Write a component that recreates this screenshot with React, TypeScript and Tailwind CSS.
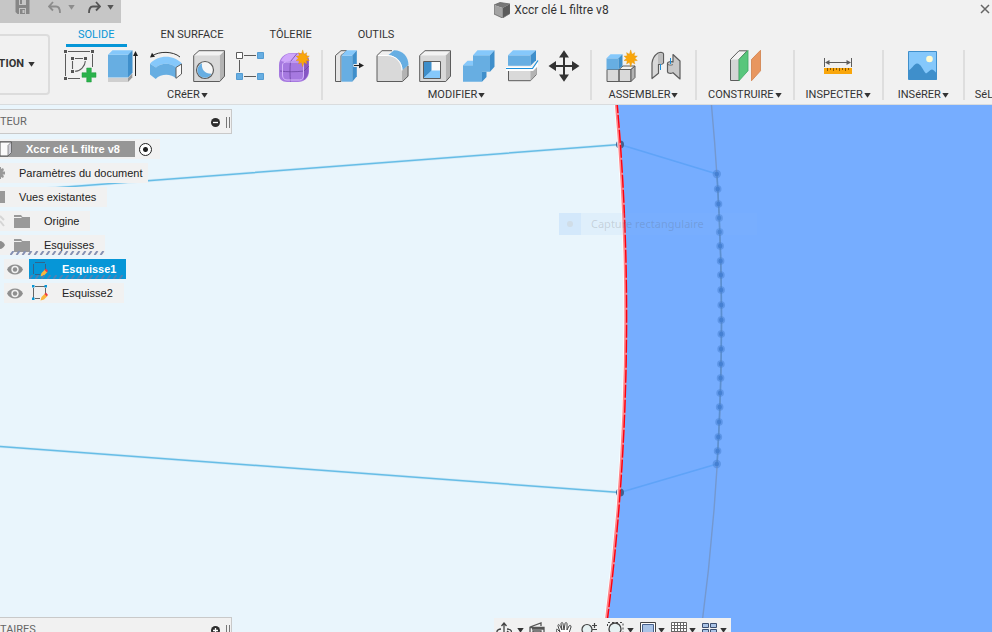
import type { ReactNode } from 'react';

interface IconProps {
  children: ReactNode;
}

interface ToolGroup {
  label: string;
  padding: string;
  tools: { name: string; icon: ReactNode }[];
}

const BLUE = '#67aee2';
const BLUE_LIGHT = '#85c8fb';
const BLUE_DARK = '#3f8fcb';
const LINE = '#5c5c5c';

/** 32px tool icon frame */
function Icon({ children }: IconProps) {
  return (
    <svg className="w-8 h-8 overflow-visible" viewBox="0 0 32 32" fill="none">
      {children}
    </svg>
  );
}

function Caret({ className = 'text-[#333]' }: { className?: string }) {
  return (
    <svg className={`w-[7px] h-[5px] shrink-0 ${className}`} viewBox="0 0 7 5">
      <path d="M0.3 0h6.4L3.5 4.8z" fill="currentColor" />
    </svg>
  );
}

/** Orange "new" star, ten spikes */
function Star({ x, y }: { x: number; y: number }) {
  const points = Array.from({ length: 20 }, (_, i) => {
    const r = i % 2 === 0 ? (i % 5 === 0 ? 8.4 : 7) : 4.2;
    const a = (i * Math.PI) / 10;
    return `${x + r * Math.sin(a)},${y - r * Math.cos(a)}`;
  }).join(' ');
  return <polygon points={points} fill="#f9a60b" stroke="#e39203" strokeWidth="0.4" />;
}

const sketchIcon = (
  <Icon>
    <path d="M4 1.5h22M1.5 4v22M28.5 4v13M4 28.5h12" stroke={LINE} />
    <path d="M11 8.5h8M8.500 11v8M21.3 11c0 5-5 10.3-10.3 10.3" stroke={LINE} strokeWidth="1.1" />
    <path d="M0 0h3v3H0zM27 0h3v3h-3zM0 27h3v3H0zM7 7h3v3H7zM20 7h3v3h-3zM7 20h3v3H7z" fill="#555" />
    <path d="M22.7 18h4.600v4.700H32v4.600h-4.700V32h-4.600v-4.700H18v-4.600h4.700z" fill="#2bb24c" stroke="#1f9a3f" strokeWidth="0.5" />
  </Icon>
);

const extrudeIcon = (
  <Icon>
    <path d="M1 28h20v4H1z" fill="#cfcfcf" />
    <path d="M21 28l4.300-4.500v4L21 32z" fill="#999" />
    <path d="M1 4.700h20V27.500H1z" fill={BLUE} />
    <path d="M1 4.700L5.500.3h20L21 4.700z" fill={BLUE_LIGHT} />
    <path d="M21 4.700L25.500.3v22.500L21 27.500z" fill={BLUE_DARK} />
    <path d="M28.5 5v21" stroke="#222" />
    <path d="M26 6l2.500-5L31 6z" fill="#222" />
  </Icon>
);

const revolveIcon = (
  <Icon>
    <path d="M0 13.700C8 4.500 24 4.500 32 13.700L26 17.500C21 12.500 11 12.500 6 17.500z" fill={BLUE_LIGHT} />
    <path d="M0 13.700l6 3.800c5-5 15-5 20 0V28.500c-5-5-15-5-20.300.5L0 24.500z" fill={BLUE} />
    <path d="M26 17.500l5.500-3.500v10L26 28.300z" fill="#fafafa" stroke={LINE} />
    <path d="M2 6C9 1 23 1 30 7" stroke="#333" />
    <path d="M0 7.500L2 2.800l3 4z" fill="#222" />
  </Icon>
);

/** Grey cube outline shared by the hole and shell icons */
const greyCube = (
  <g stroke={LINE} strokeLinejoin="round">
    <path d="M.7 5.500L6 .7h25.500l-4.700 4.800z" fill="#f3f3f3" stroke="none" />
    <path d="M.7 5.500h26v26H.7z" fill="#d9d9d9" stroke="none" />
    <path d="M26.800 5.500L31.500.7v25.500l-4.700 5.300z" fill="#b3b3b3" stroke="none" />
    <path d="M.7 5.500L6 .7h25.500v25.500l-4.700 5.300H.7z" />
  </g>
);

const holeIcon = (
  <Icon>
    {greyCube}
    <circle cx="12" cy="20" r="8.5" fill="#f6f6f6" stroke={LINE} strokeWidth="1.2" />
    <path d="M9 13.300c-1 6 3 10.700 9.500 10.500A7.500 7.500 0 1 1 9 13.300z" fill={BLUE} />
  </Icon>
);

const patternIcon = (
  <Icon>
    <path d="M8 5.500h12M3.500 10v12M8 26.500h12" stroke={LINE} />
    <path d="M.5 2.500h6v6h-6z" fill="#fff" stroke={LINE} />
    <path d="M21.500 2.500h6v6h-6zM.5 23.500h6v6h-6zM21.500 23.500h6v6h-6z" fill={BLUE} stroke={BLUE_DARK} strokeWidth="0.8" />
  </Icon>
);

const formIcon = (
  <Icon>
    <path d="M0 15C0 8 6 3 12 3h9c6 0 9 3 9 8v10c0 7-5 11-11 11H8c-5 0-8-3-8-7z" fill="#a679e0" />
    <path d="M2 11c2-5 6-7.500 10-7.500h9c4 0 6 1 8 4l-5 4c-6-1-12-1-18 .5z" fill="#cfa6fb" />
    <path d="M25 12l4.500-4v13c0 4-2 7-5 9.500.7-6 .7-12 .5-18.500z" fill="#8757c4" />
    <path d="M1 21c7 1 16 1 24 0l5-5M11.500 31.500c-.7-7-.7-13 0-20L18 3.500" stroke="#6c45a3" strokeWidth="0.8" />
    <path d="M3.500 15c0-2 2-3 4-3h14c2 0 3 1 3 3v10c0 3-1 5-4 5H8c-3 0-4.500-2-4.500-5z" stroke="#d5b5fa" />
    <Star x={23.7} y={8.3} />
  </Icon>
);

const pressPullIcon = (
  <Icon>
    <path d="M2.500 5.500L8 .7h6L8 5.500v26H2.500z" fill="#e6e6e6" stroke={LINE} />
    <path d="M8.500 5.500h10.800v26.200H8.500z" fill={BLUE} />
    <path d="M8.500 5.500L13.500.3h10.300l-4.500 5.200z" fill={BLUE_LIGHT} />
    <path d="M19.300 5.500L23.800.3v26l-4.500 5.400z" fill={BLUE_DARK} />
    <path d="M20.500 15.500h6" stroke="#fff" strokeWidth="3" />
    <path d="M21 15.500h6" stroke="#222" strokeWidth="1.2" />
    <path d="M26 12.700l5 2.800-5 2.800z" fill="#222" />
  </Icon>
);

const filletIcon = (
  <Icon>
    <path d="M1 5.500L6 .7h7.500L20 2l5.500 16 6.500-4v12.200l-5.500 5.300H1z" fill="#f0f0f0" />
    <path d="M1 5.500h10c9 0 15 7 15 15v11H1z" fill="#d9d9d9" />
    <path d="M26 20l6.300-5v11.200L26 31.500z" fill="#b3b3b3" />
    <path d="M12.500 5L18 .3C27 .3 32.500 7 32.500 15L26.500 20C26.500 12 21 6 12.500 5z" fill={BLUE} />
    <path d="M1 5.500h10c9 0 15 7 15 15" stroke="#fff" />
    <path d="M16 .7H6L1 5.500v26h25.500l5.500-5.300V16" stroke={LINE} strokeLinejoin="round" />
  </Icon>
);

const shellIcon = (
  <Icon>
    {greyCube}
    <path d="M4.500 11.500h17v17h-17z" fill="#fafafa" stroke={LINE} />
    <path d="M5 12h7.500v9L5 28z" fill={BLUE_DARK} />
    <path d="M5 28l7.500-7.500H21V28z" fill={BLUE_LIGHT} />
  </Icon>
);

const combineIcon = (
  <Icon>
    <path d="M1 15.300h10V5.300h17v16.400h-8v10H1z" fill={BLUE} />
    <path d="M1 15.300l4.500-4.600H11v4.600zM11 5.300L15.500.3h17L28 5.300z" fill={BLUE_LIGHT} />
    <path d="M28 5.300L32.500.3v16.500L28 21.700zM20 21.700h4.500V27L20 31.700z" fill={BLUE_DARK} />
  </Icon>
);

const splitIcon = (
  <Icon>
    <path d="M3.500 20.500h22L31 15v10l-5.500 5.700h-22z" fill="#d9d9d9" stroke={LINE} />
    <path d="M25.500 21L31 15.500v9.300l-5.500 5.700z" fill="#b3b3b3" />
    <path d="M1 17h27l5-5v4l-5 5H1z" fill="#fff" />
    <path d="M3 5.300h22.500v10.500H3z" fill={BLUE} />
    <path d="M3 5.300L8 .3h23l-5.500 5z" fill={BLUE_LIGHT} />
    <path d="M25.500 5.300l5.500-5v10l-5.500 5.500z" fill={BLUE_DARK} />
    <path d="M1 18.500h26.500L33 10.500" stroke="#1d8fd8" strokeWidth="1.2" />
  </Icon>
);

const moveIcon = (
  <Icon>
    <path d="M16 5v22M5 16h22" stroke="#333" strokeWidth="2" />
    <path d="M16 .3l5 7.200H11zM16 31.700l5-7.200H11zM.5 16L8 11v10zM31.500 16L24 11v10z" fill="#333" />
  </Icon>
);

const newComponentIcon = (
  <Icon>
    <path d="M1 19.500h12v12H1zM13 19.500h12v12H13z" fill="#d9d9d9" stroke={LINE} />
    <path d="M13 19.500l4-3.500h12l-4 3.500z" fill="#f3f3f3" stroke={LINE} />
    <path d="M25 19.500l4-3.500v11.500l-4 4z" fill="#b3b3b3" stroke={LINE} />
    <path d="M.5 8.300h12v11.200H.5z" fill={BLUE} />
    <path d="M.5 8.300l4-4h12l-4 4z" fill={BLUE_LIGHT} />
    <path d="M12.500 8.300l4-4V16l-4 3.500z" fill={BLUE_DARK} />
    <Star x={24.7} y={8.3} />
  </Icon>
);

const jointIcon = (
  <Icon>
    <path d="M3 28.500V13c.5-4 3-8 6-10 3-1 5.500-.5 5.500 1v9c-1 1.500-3 1.500-5 1.300v9z" fill="#d9d9d9" stroke={LINE} strokeWidth="1.2" strokeLinejoin="round" />
    <path d="M9 13.500V4.500c1-1.500 4-1.500 5 0v8.500c-1.500 1-3.500 1.200-5 .5z" fill="#bdbdbd" />
    <path d="M24 4.500l7 6.500v18l-7-6.300c-2 1-5.500.8-5.500-.9v-8.500c0-1.500 3.500-2.300 5.500-1.300z" fill="#c9c9c9" stroke={LINE} strokeWidth="1.2" strokeLinejoin="round" />
    <path d="M19 14.500c1.500.9 3.500.9 5 0" stroke={LINE} strokeWidth="0.8" />
    <path d="M11.500 14v6M21.500 8v6" stroke="#1d8fd8" />
  </Icon>
);

const planeIcon = (
  <Icon>
    <path d="M1.500 9.500L10 .8h8L10 9.500v21H1.500z" fill="#f3f3f3" stroke={LINE} />
    <path d="M2 9.500h7.500V30H2z" fill="#d5d5d5" />
    <path d="M10 9.500L19 .3v20.500l-9 10z" fill="#58c67c" stroke="#3ea862" strokeWidth="0.8" />
    <path d="M22.500 9.500L31.500.3v20.500l-9 10z" fill="#e8965f" stroke="#d07f49" strokeWidth="0.8" />
  </Icon>
);

const measureIcon = (
  <Icon>
    <path d="M2.500 8v9M29.500 8v9M5 12.500h22" stroke={LINE} />
    <path d="M3 12.500L7.500 10v5zM29 12.500L24.500 10v5z" fill={LINE} />
    <path d="M2 18h28v6H2z" fill="#f9a60b" />
    <path d="M5.500 18v3M8.500 18v2M11.500 18v3M14.500 18v2M17.500 18v3M20.500 18v2M23.500 18v3M26.500 18v2" stroke="#8d5a00" />
  </Icon>
);

const imageIcon = (
  <Icon>
    <path d="M1.500 1.500h28v28h-28z" fill={BLUE_LIGHT} />
    <path d="M2 20c3-1 5-6.500 8-6.500 4 0 6 7 9 10 2-1 4-4 6-4s3 2.500 4.500 3.500v7H2z" fill={BLUE_DARK} />
    <path d="M1.500 1.500h28v28h-28z" stroke={BLUE_DARK} />
    <circle cx="22.500" cy="9" r="3.300" fill="#fffbd1" />
  </Icon>
);

const groups: ToolGroup[] = [
  {
    label: 'CRéER',
    padding: 'px-[10px]',
    tools: [
      { name: 'Esquisse', icon: sketchIcon },
      { name: 'Extrusion', icon: extrudeIcon },
      { name: 'Révolution', icon: revolveIcon },
      { name: 'Trou', icon: holeIcon },
      { name: 'Réseau', icon: patternIcon },
      { name: 'Forme', icon: formIcon }
    ]
  },
  {
    label: 'MODIFIER',
    padding: 'px-[10px]',
    tools: [
      { name: 'Appuyer/Tirer', icon: pressPullIcon },
      { name: 'Congé', icon: filletIcon },
      { name: 'Coque', icon: shellIcon },
      { name: 'Combiner', icon: combineIcon },
      { name: 'Scinder', icon: splitIcon },
      { name: 'Déplacer', icon: moveIcon }
    ]
  },
  {
    label: 'ASSEMBLER',
    padding: 'px-[14px]',
    tools: [
      { name: 'Nouveau composant', icon: newComponentIcon },
      { name: 'Liaison', icon: jointIcon }
    ]
  },
  { label: 'CONSTRUIRE', padding: 'px-[11px]', tools: [{ name: 'Plan', icon: planeIcon }] },
  { label: 'INSPECTER', padding: 'px-[11px]', tools: [{ name: 'Mesurer', icon: measureIcon }] },
  { label: 'INSéRER', padding: 'px-[14px]', tools: [{ name: 'Image', icon: imageIcon }] }
];

const tabs = ['SOLIDE', 'EN SURFACE', 'TÔLERIE', 'OUTILS'];

function QuickBar() {
  return (
    <div className="flex items-start w-[121px] h-[23px] pl-[15px] bg-[#c6c6c6] shrink-0">
      <button aria-label="Enregistrer" className="mr-[18px]">
        <svg className="w-[15px] h-[14px]" viewBox="0 0 15 14">
          <path d="M.5 0h14v14h-12l-2-2z" fill="#868686" />
          <path d="M4 0h7v5H4zM4 8h7v6H4z" fill="#c6c6c6" />
          <path d="M5 0h2v4H5zM5 9h5v5H5z" fill="#868686" />
          <path d="M7.500 10h2v3h-2z" fill="#c6c6c6" />
        </svg>
      </button>
      <button aria-label="Annuler" className="flex items-center gap-[7px] h-[14px] mr-[13px] text-[#8c8c8c]">
        <svg className="w-[13px] h-[14px]" viewBox="0 0 13 14" fill="none" stroke="currentColor" strokeWidth="1.8">
          <path d="M5 2L1 6.500l4 4M1.500 6.500H8c3 0 4 2.500 4 6.500" />
        </svg>
        <Caret className="text-[#8c8c8c]" />
      </button>
      <button aria-label="Rétablir" className="flex items-center gap-[6px] h-[14px] text-[#555]">
        <svg className="w-[13px] h-[14px]" viewBox="0 0 13 14" fill="none" stroke="currentColor" strokeWidth="1.8">
          <path d="M8 2l4 4.500-4 4M11.500 6.500H5c-3 0-4 2.500-4 6.500" />
        </svg>
        <Caret className="text-[#555]" />
      </button>
    </div>
  );
}

function Header() {
  return (
    <header className="bg-[#f1f1f1] border-b border-[#d9dcde] h-[105px] overflow-hidden shrink-0">
      <div className="flex">
        <QuickBar />
        <div className="flex flex-1 items-center justify-center gap-1 h-5 pl-[2px] text-[12px] text-[#333]">
          <svg className="w-4 h-4" viewBox="0 0 16 16">
            <path d="M0 3l6-2.500L16 2l-7.500 4z" fill="#777" />
            <path d="M0 3l8.500 3v10L0 12z" fill="#a3a3a3" />
            <path d="M8.500 6L16 2v9.500L8.500 16z" fill="#5a5a5a" />
            <path d="M0 3l6-2.500L16 2v9.500L8.500 16 0 12z" fill="none" stroke="#666" strokeWidth="0.8" />
          </svg>
          <h1>Xccr clé L filtre v8</h1>
        </div>
        <button aria-label="Fermer" className="flex items-center h-[18px] pr-[2px]">
          <svg className="w-[10px] h-[10px]" viewBox="0 0 10 10" stroke="#666" strokeWidth="1.5">
            <path d="M1 1l8 8M9 1L1 9" />
          </svg>
        </button>
      </div>

      <div className="flex">
        <button className="flex items-center justify-end gap-1 w-[50px] h-[61px] mt-[11px] pr-[13px] rounded-r border-2 border-l-0 border-[#dcdcdc] text-[11px] font-bold text-[#333] shrink-0">
          TION
          <Caret />
        </button>

        <div className="flex-1 min-w-0 overflow-hidden">
          <nav className="flex gap-[22px] pl-4 text-[11px] leading-4 text-[#333]">
            {tabs.map((tab, i) => (
              <button
                key={tab}
                className={`px-3 pt-[3px] h-6 border-b-[3px] whitespace-nowrap ${
                  i === 0 ? 'border-[#0696d7] text-[#0696d7]' : 'border-transparent'
                }`}
              >
                {tab}
              </button>
            ))}
          </nav>

          {/* Tool groups */}
          <div className="flex pt-[3px] pl-1">
            {groups.map((group) => (
              <section
                key={group.label}
                className={`flex flex-col items-center gap-[5px] h-[50px] shrink-0 border-r-2 border-[#dedede] ${group.padding}`}
              >
                <div className="flex gap-[11px]">
                  {group.tools.map((tool) => (
                    <button key={tool.name} aria-label={tool.name}>
                      {tool.icon}
                    </button>
                  ))}
                </div>
                <button className="flex items-center gap-[1px] text-[11px] leading-4 text-[#333] whitespace-nowrap">
                  {group.label}
                  <Caret />
                </button>
              </section>
            ))}
            <section className="flex flex-col justify-end pl-[10px] h-[53px] text-[11px] leading-4 text-[#333]">SéL</section>
          </div>
        </div>
      </div>
    </header>
  );
}

const dotRows = [174, 189, 204, 218, 232, 246, 261, 275, 290, 305, 320, 334, 349, 364, 378, 393, 407, 422, 437, 451, 464];
const dotX = (y: number) => 721.3 - (y - 319) ** 2 / 4700;

/** Sketch geometry behind the panels */
function Drawing() {
  return (
    <svg className="absolute inset-0 w-full h-full" viewBox="0 105 992 527" preserveAspectRatio="xMinYMin slice" fill="none">
      <path d="M616 100A2400 2400 0 0 1 605 632H992V100z" fill="#76adff" />
      <path d="M0 192L620 144.500M0 446.500L620 492.500" stroke="#d3ebf8" strokeWidth="3" />
      <path d="M0 192L620 144.500M0 446.500L620 492.500" stroke="#67bde6" strokeWidth="1.5" />
      <path d="M620 144.500L717 174M717 464L620 492.500" stroke="#5fa3f8" strokeWidth="1.6" />
      <path d="M711 100A2350 2350 0 0 1 701 632" stroke="#7498cf" strokeWidth="1.4" />
      <path d="M717 174A2350 2350 0 0 1 717 464" stroke="#5a8fd0" strokeWidth="1.5" />
      {dotRows.map((y, i) => (
        <g key={y} fill="#4580d2">
          <circle cx={dotX(y)} cy={y} r={i === 0 || i === 20 ? 4.2 : 3.8} opacity="0.5" />
          <circle cx={dotX(y)} cy={y} r="2.2" />
        </g>
      ))}
      <circle cx="620" cy="144.500" r="4" fill="#42608f" />
      <circle cx="620" cy="492.500" r="4" fill="#42608f" />
      <path d="M614.500 100A2400 2400 0 0 1 603.500 632" stroke="#fff" strokeWidth="1.5" />
      <path d="M616 100A2400 2400 0 0 1 605 632" stroke="#ff8489" strokeWidth="3" />
      <path d="M616.800 100A2400 2400 0 0 1 605.800 632" stroke="#fb0010" strokeWidth="1.4" strokeDasharray="13 2" />
    </svg>
  );
}

function FolderIcon() {
  return (
    <svg className="w-4 h-[13px]" viewBox="0 0 16 13">
      <path d="M0 0h7l1.500 2H16v11H0z" fill="#999" />
      <path d="M0 2.500h7.500" stroke="#f1f1f1" />
    </svg>
  );
}

function EyeIcon() {
  return (
    <svg className="w-4 h-[11px]" viewBox="0 0 16 11">
      <path d="M0 5.500C3-1.300 13-1.300 16 5.500 13 12.300 3 12.300 0 5.500z" fill="#8f8f8f" />
      <circle cx="8" cy="5.500" r="3.700" fill="#f1f1f1" />
      <circle cx="8" cy="5.500" r="2.200" fill="#8f8f8f" />
    </svg>
  );
}

function SketchFileIcon({ dark = false }: { dark?: boolean }) {
  return (
    <svg className="w-4 h-4" viewBox="0 0 16 16" fill="none">
      <path d="M3 1.500h10M1.500 3v10M13.500 3v6M3 13.500h5" stroke={dark ? '#33648a' : '#666'} />
      {!dark && <path d="M0 0h2.500v2.500H0zM12.500 0H15v2.500h-2.500zM0 12.500h2.500V15H0z" fill="#0696d7" />}
      <path d="M8.500 15.500l1-3.500 3.500-3.500 2.500 2.500L12 14.500z" fill="#fbb63c" />
      <path d="M12.500 9l1.500-1.500 2 2.500-1.300 1.300z" fill="#ee3a43" />
    </svg>
  );
}

/** Slanted selection hatch under a tree row */
function Hatch({ className }: { className: string }) {
  return (
    <svg className={`absolute bottom-0 w-[95px] h-1 ${className}`} viewBox="0 0 95 4" stroke="currentColor" strokeWidth="2">
      {Array.from({ length: 16 }, (_, i) => (
        <path key={i} d={`M${i * 6 + 0.5} 4L${i * 6 + 3.5} 0`} />
      ))}
    </svg>
  );
}

function PanelBar({ label, open }: { label: string; open: boolean }) {
  return (
    <div className="flex items-center w-[232px] h-[25px] pt-[1px] pr-[1px] bg-[#f1f1f1] border border-l-0 border-[#c9c9c9] text-[11px] leading-4 text-[#666] shrink-0">
      <span className="flex-1">{label}</span>
      <button aria-label={label} className="mr-[6px]">
        <svg className="w-[9px] h-[9px]" viewBox="0 0 9 9">
          <circle cx="4.500" cy="4.500" r="4.500" fill="#2d2d2d" />
          <path d={open ? 'M2 4.500h5' : 'M2 4.500h5M4.500 2v5'} stroke="#fff" strokeWidth="1.3" />
        </svg>
      </button>
      <span className="w-1 h-[11px] border-l border-r border-[#777]" />
    </div>
  );
}

function BrowserTree() {
  return (
    <div className="flex flex-col items-start gap-1 pt-[5px] text-[11px] leading-4 text-[#222] font-['Liberation_Sans',Arial,sans-serif]">
      <label className="flex items-center h-5 pr-2 bg-[#f1f1f1]">
        <span className="flex items-center gap-[14px] h-4 pr-[15px] bg-[#969696] text-white font-bold whitespace-nowrap">
          <svg className="w-3 h-4" viewBox="0 0 12 16">
            <path d="M0 1h11.500v10.500L8 15H0z" fill="#fafafa" stroke="#555" />
            <path d="M8 4.500L11.500 1v10.500L8 15z" fill="#d0d0d8" stroke="#555" strokeWidth="0.6" />
          </svg>
          Xccr clé L filtre v8
        </span>
        <input
          type="radio"
          name="active"
          defaultChecked
          className="appearance-none w-[13px] h-[13px] ml-1 rounded-full border border-[#222] bg-[radial-gradient(circle,#222_2px,#fff_3px)]"
        />
      </label>

      <div className="flex items-center gap-[14px] h-5 pr-[5px] bg-[#f1f1f1]">
        <svg className="w-[5px] h-3" viewBox="0 0 5 12">
          <path d="M0 0h1v2l2-1 1 2-1.500 1.500H5v3H2.500L4 9l-1 2-2-1v2H0z" fill="#999" />
        </svg>
        Paramètres du document
      </div>

      <div className="flex items-center gap-[14px] h-5 pr-[11px] bg-[#f1f1f1]">
        <span className="w-[5px] h-3 bg-[#999]" />
        Vues existantes
      </div>

      <div className="flex items-center h-5 pr-[11px] bg-[#f1f1f1]">
        <svg className="w-[5px] h-3 mr-[9px]" viewBox="0 0 5 12" stroke="#d5d5d5" strokeWidth="2" fill="none">
          <path d="M0 1l4 4M0 6l4 5" />
        </svg>
        <FolderIcon />
        <span className="ml-[14px]">Origine</span>
      </div>

      <div className="relative flex items-center h-5 pr-[11px] bg-[#f1f1f1]">
        <svg className="w-[5px] h-3 mr-[9px]" viewBox="0 0 5 12">
          <path d="M0 2c2 0 4 2 5 4-1 2-3 4-5 4z" fill="#8f8f8f" />
        </svg>
        <FolderIcon />
        <span className="ml-[14px]">Esquisses</span>
        <Hatch className="right-0 text-[#8591b3]" />
      </div>

      <div className="flex items-center h-5 ml-1 bg-[#f1f1f1]">
        <button aria-label="Afficher Esquisse1" className="px-[3px] mr-[3px]">
          <EyeIcon />
        </button>
        <span className="relative flex items-center gap-[14px] h-5 pl-[3px] pr-[10px] bg-[#0696d7] text-white font-bold">
          <Hatch className="left-0 text-[#4f83b4]" />
          <SketchFileIcon dark />
          Esquisse1
        </span>
      </div>

      <div className="flex items-center h-5 ml-1 pr-[11px] bg-[#f1f1f1]">
        <button aria-label="Afficher Esquisse2" className="px-[3px] mr-[6px]">
          <EyeIcon />
        </button>
        <SketchFileIcon />
        <span className="ml-[14px]">Esquisse2</span>
      </div>
    </div>
  );
}

function NavigationBar() {
  return (
    <div className="flex items-start w-[237px] h-[15px] mt-[1px] pl-[2px] pt-1 bg-[#f1f1f1] overflow-hidden">
      <button aria-label="Orbite" className="flex gap-[5px] mr-[5px]">
        <svg className="w-4 h-4" viewBox="0 0 16 16" fill="none" stroke="#444" strokeWidth="1.3">
          <path d="M8 1v12M5.500 4L8 1l2.500 3M5 7C0 7.500 0 11 3 11.500h10c4-1 3-4-2-4.500M11 9l3 2.500-3 2.500" />
        </svg>
        <span className="pt-[6px]"><Caret /></span>
      </button>
      <button aria-label="Regarder" className="mr-[11px]">
        <svg className="w-4 h-4" viewBox="0 0 16 16" fill="none" stroke="#555" strokeWidth="1.3">
          <path d="M1 5l11-4v3M1 5.500h14V16H1zM4 9h8v6H4zM3 7h12" />
        </svg>
      </button>
      <button aria-label="Panoramique" className="mr-[9px]">
        <svg className="w-4 h-4" viewBox="0 0 16 16" fill="#fff" stroke="#444">
          <path d="M4 16L0 8c0-1 1-1 2 0l2 2-2-6c0-2 1-2 2 0l2 4-1-6c0-2 2-2 2 0l1 6 1-6c0-2 2-2 2 0v6l2-4c1-1 2-1 2 1l-2 6-2 5z" />
        </svg>
      </button>
      <button aria-label="Zoom" className="mr-[10px]">
        <svg className="w-4 h-4" viewBox="0 0 16 16" fill="none" stroke="#444" strokeWidth="1.2">
          <circle cx="6" cy="7.500" r="5" fill="#e6f1f2" />
          <path d="M9.500 11l4 4M11 3.500h5M13.500 1v5M11 7.500h5" />
        </svg>
      </button>
      <button aria-label="Ajuster" className="flex gap-[3px] mr-[6px]">
        <svg className="w-[17px] h-4" viewBox="0 0 17 16" fill="none" stroke="#444">
          <path d="M.5 4V.5h15.500V16" strokeDasharray="2 2" />
          <circle cx="8" cy="7" r="6" fill="#e6f1f2" strokeWidth="1.3" />
        </svg>
        <span className="pt-[6px]"><Caret /></span>
      </button>
      <button aria-label="Affichage" className="flex gap-[2px] mr-[6px]">
        <svg className="w-4 h-4" viewBox="0 0 16 16" fill="#fff" stroke="#444">
          <path d="M.5.5h15V16H.5z" />
          <path d="M2.500 2.500h11V15h-11z" fill="#a9c3e6" stroke="#48628d" />
        </svg>
        <span className="pt-[6px]"><Caret /></span>
      </button>
      <button aria-label="Grille" className="flex gap-[2px] mr-[6px]">
        <svg className="w-4 h-4" viewBox="0 0 16 16" fill="#fff" stroke="#666">
          <path d="M.5.5h15V16H.5zM3.500.5V16M6.500.5V16M9.500.5V16M12.500.5V16M.5 3.500h15M.5 6.500h15M.5 9.500h15" />
        </svg>
        <span className="pt-[6px]"><Caret /></span>
      </button>
      <button aria-label="Fenêtres" className="flex gap-[2px]">
        <svg className="w-4 h-4" viewBox="0 0 16 16" fill="#a9c3e6" stroke="#3c4f70">
          <path d="M.5 1.500h6v4h-6zM8.500 1.500h6v4h-6zM.5 7.500h6v6h-6zM8.500 7.500h6v6h-6z" />
        </svg>
        <span className="pt-[6px]"><Caret /></span>
      </button>
    </div>
  );
}

export default function App() {
  return (
    <div className="flex flex-col h-screen overflow-hidden bg-[#e9f5fc] font-[Roboto,sans-serif]">
      <Header />

      <main className="relative flex flex-col flex-1 min-h-0">
        <Drawing />

        {/* Fading command hint */}
        <div className="absolute left-[559px] top-[108px] flex items-center gap-[10px] w-[198px] h-[22px] bg-[#86b8f2]/10 font-['Noto_Sans',sans-serif] text-[11px] text-[#555]/20 whitespace-nowrap">
          <span className="flex items-center justify-center w-[22px] h-[22px] bg-[#a5cdff]/20">
            <span className="w-[6px] h-[6px] rounded-full bg-[#c9c3ba]/30" />
          </span>
          Capture rectangulaire
        </div>

        <aside className="relative flex-1 min-h-0 pt-1">
          <PanelBar label="TEUR" open />
          <BrowserTree />
        </aside>

        <footer className="relative flex items-start h-[15px] overflow-hidden">
          <PanelBar label="TAIRES" open={false} />
          <div className="flex flex-1 justify-center">
            <NavigationBar />
          </div>
        </footer>
      </main>
    </div>
  );
}
